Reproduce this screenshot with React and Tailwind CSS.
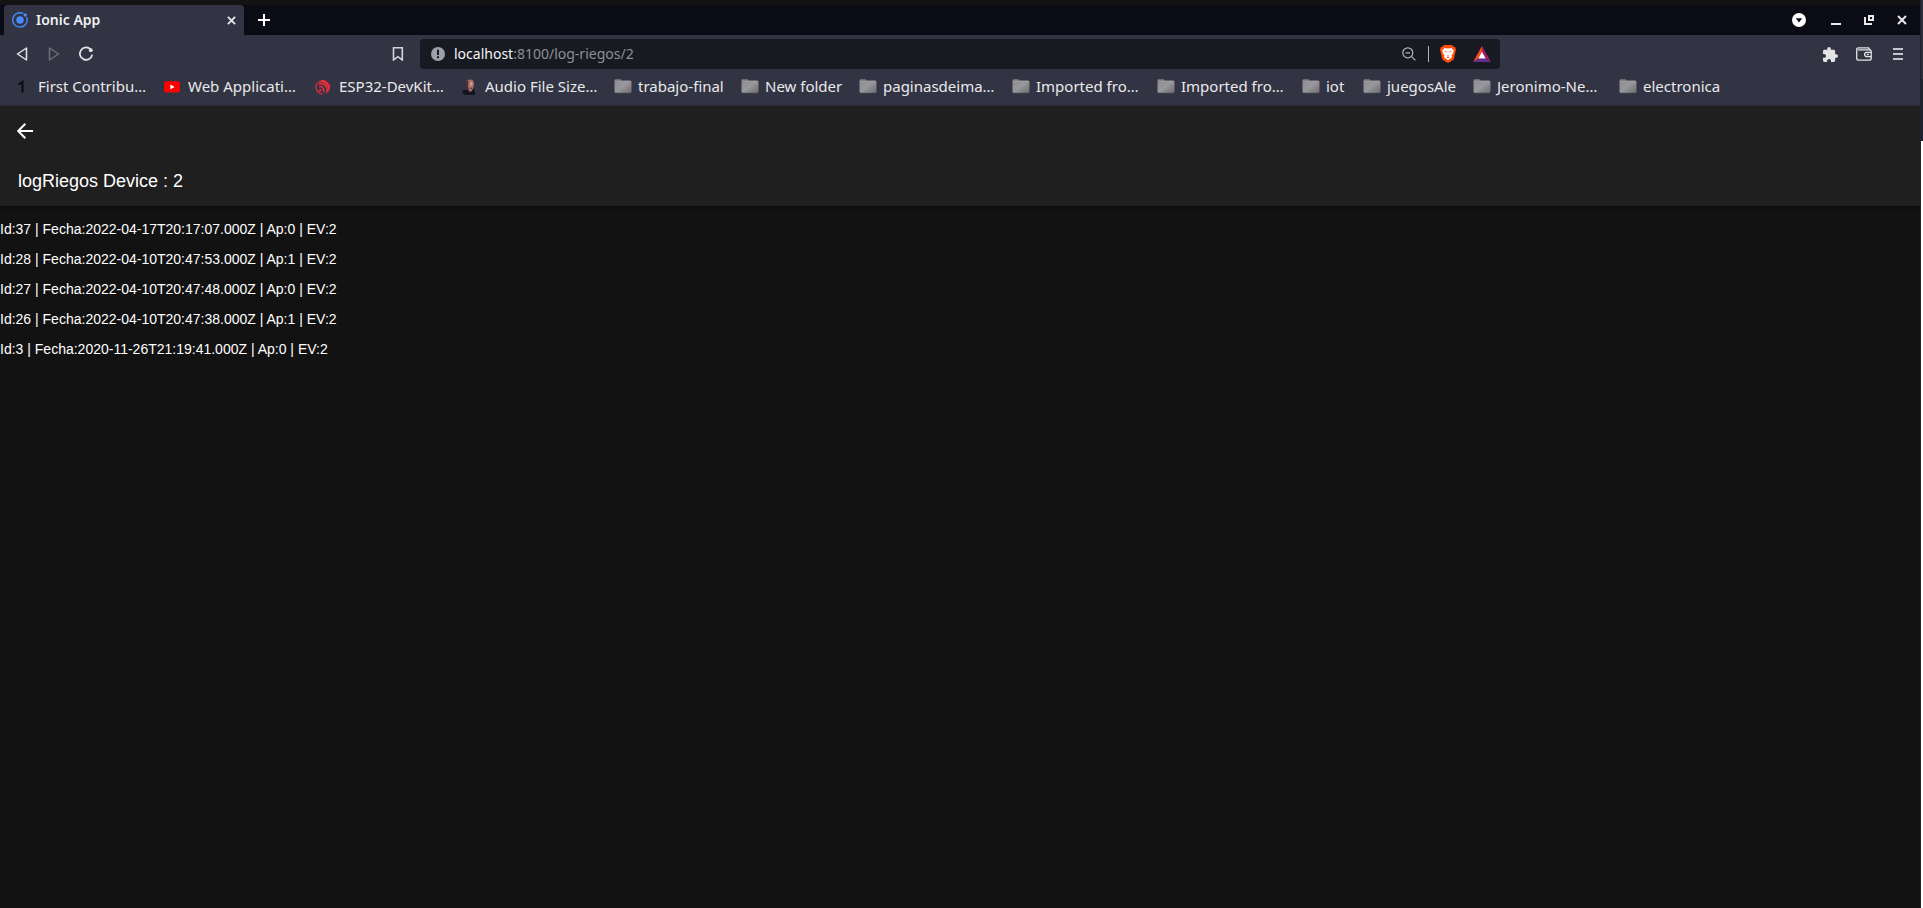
import React from "react";

const LOGS = [
  { id: 37, fecha: "2022-04-17T20:17:07.000Z", ap: 0, ev: 2 },
  { id: 28, fecha: "2022-04-10T20:47:53.000Z", ap: 1, ev: 2 },
  { id: 27, fecha: "2022-04-10T20:47:48.000Z", ap: 0, ev: 2 },
  { id: 26, fecha: "2022-04-10T20:47:38.000Z", ap: 1, ev: 2 },
  { id: 3, fecha: "2020-11-26T21:19:41.000Z", ap: 0, ev: 2 },
];

function IonicIcon() {
  return (
    <svg className="size-4" viewBox="0 0 16 16" aria-hidden="true">
      <path d="M11.4 1.6A7.2 7.2 0 1 0 14.6 5.2" fill="none" stroke="#4285f4" strokeWidth="1.5" />
      <circle cx="8" cy="8" r="3.7" fill="#4a8cff" />
      <circle cx="13.3" cy="3" r="1.7" fill="#4a8cff" />
    </svg>
  );
}

function CloseIcon({ className }) {
  return (
    <svg className={className} viewBox="0 0 10 10" fill="none" stroke="currentColor" strokeWidth="2" aria-hidden="true">
      <path d="M1 1l8 8M9 1l-8 8" />
    </svg>
  );
}

function OneIcon() {
  return (
    <svg className="size-4" viewBox="0 0 16 16" fill="none" stroke="#0a0a0a" strokeWidth="2" aria-hidden="true">
      <path d="M4.5 5.5 8.5 2.8V13.5" />
    </svg>
  );
}

function YoutubeIcon() {
  return (
    <svg className="size-4" viewBox="0 0 16 16" aria-hidden="true">
      <rect x="0" y="2.2" width="16" height="11.4" rx="2.8" fill="#f00" />
      <path d="M6.4 5.5v4.8L10.6 7.9z" fill="#fff" />
    </svg>
  );
}

function EspressifIcon() {
  return (
    <svg className="size-4" viewBox="0 0 16 16" fill="none" stroke="#e8303a" strokeWidth="1.6" aria-hidden="true">
      <defs>
        <clipPath id="disc">
          <circle cx="8" cy="8" r="7.2" />
        </clipPath>
      </defs>
      <g clipPath="url(#disc)">
        <circle cx="5.2" cy="11.2" r="1.2" fill="#e8303a" stroke="none" />
        <path d="M4.2 7.6A4 4 0 0 1 8.6 13" />
        <path d="M3.6 5A6.500 6.500 0 0 1 11.2 14.500" />
        <path d="M3 2.700A9 9 0 0 1 13.800 13.500" />
        <path d="M6 .8A11 11 0 0 1 15.500 10" />
      </g>
      <path d="M2.600 3.600A7 7 0 0 0 8 15" strokeWidth="1.200" />
    </svg>
  );
}

function PortraitIcon() {
  return (
    <svg className="size-4" viewBox="0 0 16 16" aria-hidden="true">
      <path d="M1 12.5Q4 10 7 11l6-1q1.500 3 1 6H4Q1.500 15 1 12.500z" fill="#14131f" />
      <path d="M6 1.500Q9.500-.5 12 1.500q1.500 2 .8 5.500-.8 4-3.300 6Q6.500 12 5.500 8 4.500 3.500 6 1.500z" fill="#a86f6c" />
      <path d="M5 3Q6.500 1 7.500 1.500L7 7.500l1.500 4.500Q5 11 4.500 7z" fill="#4d2f3b" />
      <path d="M9 3.500q1.500-1 2.500.2l-.5 3-1.500.8z" fill="#d49a90" />
      <path d="M9 9.500l2-.4" stroke="#5a2733" strokeWidth="1" />
    </svg>
  );
}

function FolderIcon() {
  return (
    <svg className="h-4 w-[18px]" viewBox="0 0 18 16" aria-hidden="true">
      <defs>
        <linearGradient id="folder" x1="0" y1="0" x2="1" y2="1">
          <stop offset="0" stopColor="#8c8c90" />
          <stop offset="0.5" stopColor="#97979c" />
          <stop offset="1" stopColor="#6c6c6c" />
        </linearGradient>
      </defs>
      <path d="M.5 1.500Q.5.500 1.500.5h5q.7 0 .9 1H16q1.500 0 1.500 1.500v9.500q0 1.500-1.500 1.500H2q-1.500 0-1.500-1.500z" fill="url(#folder)" />
      <path d="M1 1h5.500" stroke="#77777a" />
      <path d="M1 2.500h16" stroke="#a3a3a6" strokeWidth="0.5" />
      <path d="M1.500 14h15" stroke="#55555a" strokeWidth="0.6" />
    </svg>
  );
}

const BOOKMARKS = [
  { label: "First Contribu…", icon: OneIcon, width: "w-[150px]" },
  { label: "Web Applicati…", icon: YoutubeIcon, width: "w-[151px]" },
  { label: "ESP32-DevKit…", icon: EspressifIcon, width: "w-[146px]" },
  { label: "Audio File Size…", icon: PortraitIcon, width: "w-[153px]" },
  { label: "trabajo-final", icon: FolderIcon, width: "w-[127px]" },
  { label: "New folder", icon: FolderIcon, width: "w-[118px]" },
  { label: "paginasdeima…", icon: FolderIcon, width: "w-[153px]" },
  { label: "Imported fro…", icon: FolderIcon, width: "w-[145px]" },
  { label: "Imported fro…", icon: FolderIcon, width: "w-[145px]" },
  { label: "iot", icon: FolderIcon, width: "w-[61px]" },
  { label: "juegosAle", icon: FolderIcon, width: "w-[110px]" },
  { label: "Jeronimo-Ne…", icon: FolderIcon, width: "w-[146px]" },
  { label: "electronica", icon: FolderIcon, width: "w-[120px]" },
];

function TabStrip() {
  return (
    <div className="flex h-[30px] items-stretch bg-[#0b0b15] pl-1">
      <div className="flex w-60 items-center rounded-t-sm bg-[#323443] pr-2 pl-2">
        <IonicIcon />
        <span className="ml-2 flex-1 text-sm font-semibold text-[#f0f0f2]">Ionic App</span>
        <button type="button" aria-label="Close tab" className="text-[#e8e8ea]">
          <CloseIcon className="size-[9px]" />
        </button>
      </div>
      <button type="button" aria-label="New tab" className="ml-3 px-0.5 text-white">
        <svg className="size-3" viewBox="0 0 12 12" stroke="currentColor" strokeWidth="2" aria-hidden="true">
          <path d="M6 0v12M0 6h12" />
        </svg>
      </button>
      <div className="ml-auto flex items-center gap-[23px] pr-[13px] text-[#e8e8ea]">
        <button type="button" aria-label="Search tabs" className="text-white">
          <svg className="size-[14px]" viewBox="0 0 14 14" aria-hidden="true">
            <circle cx="7" cy="7" r="7" fill="currentColor" />
            <path d="M3.8 5.2h6.4L7 9.6z" fill="#0b0b15" />
          </svg>
        </button>
        <button type="button" aria-label="Minimize" className="ml-0.5">
          <svg className="size-[10px]" viewBox="0 0 10 10" aria-hidden="true">
            <path d="M0 8h10v2H0z" fill="currentColor" />
          </svg>
        </button>
        <button type="button" aria-label="Restore">
          <svg className="size-[10px]" viewBox="0 0 10 10" fill="none" stroke="currentColor" strokeWidth="2" aria-hidden="true">
            <path d="M5 1h4v4H5z" />
            <path d="M1 2v7h7" />
          </svg>
        </button>
        <button type="button" aria-label="Close window">
          <CloseIcon className="size-[10px]" />
        </button>
      </div>
    </div>
  );
}

function AddressBar() {
  return (
    <div className="flex h-[38px] items-center bg-[#323443] pr-[17px] pl-4">
      <div className="flex w-[376px] items-center text-[#e4e4e6]">
        <button type="button" aria-label="Back">
          <svg className="h-[14px] w-3" viewBox="0 0 12 14" fill="none" stroke="currentColor" strokeWidth="1.5" strokeLinejoin="round" aria-hidden="true">
            <path d="M10.500 1v12L1.500 7z" />
          </svg>
        </button>
        <button type="button" aria-label="Forward" className="ml-5 text-[#6d6e79]">
          <svg className="h-[14px] w-3" viewBox="0 0 12 14" fill="none" stroke="currentColor" strokeWidth="1.5" strokeLinejoin="round" aria-hidden="true">
            <path d="M1.500 1v12l9-6z" />
          </svg>
        </button>
        <button type="button" aria-label="Reload" className="ml-[18px]">
          <svg className="size-4" viewBox="0 0 16 16" fill="none" stroke="currentColor" strokeWidth="1.7" aria-hidden="true">
            <path d="M12.600 3.400A6.200 6.200 0 1 0 14.200 8.600" />
            <circle cx="12.8" cy="4.2" r="1.9" fill="currentColor" stroke="none" />
          </svg>
        </button>
      </div>
      <button type="button" aria-label="Bookmark this page" className="text-[#d4d4d8]">
        <svg className="h-[14px] w-3" viewBox="0 0 12 14" fill="none" stroke="currentColor" strokeWidth="1.6" aria-hidden="true">
          <path d="M1.500.8h8.800v12.200L5.900 9.700 1.500 13z" />
        </svg>
      </button>
      <div className="ml-4 flex h-[30px] w-[1080px] items-center rounded-sm bg-[#181a21] pr-[9px] pl-[11px]">
        <svg className="size-[14px] shrink-0" viewBox="0 0 14 14" aria-hidden="true">
          <circle cx="7" cy="7" r="7" fill="#9d9fa9" />
          <path d="M6 2.800h2v5.200H6zM6 9.200h2v2H6z" fill="#181a21" />
        </svg>
        <div className="ml-[9px] flex-1 text-sm text-[#8e8f94]">
          <span className="text-[#f4f4f6]">localhost</span>:8100/log-riegos/2
        </div>
        <button type="button" aria-label="Zoom" className="text-[#b4b5ba]">
          <svg className="size-[14px]" viewBox="0 0 14 14" fill="none" stroke="currentColor" strokeWidth="1.2" aria-hidden="true">
            <circle cx="5.8" cy="5.8" r="5" />
            <path d="M9.600 9.600l3.800 3.800M3.600 5.800h4.400" />
          </svg>
        </button>
        <div className="ml-3 h-4 w-px bg-[#b4b5ba]" />
        <button type="button" aria-label="Brave Shields" className="ml-[11px]">
          <svg className="h-[18px] w-4" viewBox="0 0 16 18" aria-hidden="true">
            <path d="M4 0h8l1.600 1.800h1.400L16 4.500l-.4 1.700-1.700 7.200q-.3 1.100-1.200 1.800L8 18l-4.700-2.800q-.9-.7-1.200-1.800L.4 6.200 0 4.500 1 1.800h1.400z" fill="#fb4f0b" />
            <path d="M4.500 3 8 3.500l3.500-.5 2.200 2.600-.6 2.400-1.600 2.400.4 1.700-1.500 1.300L8 15.200l-2.400-1.800-1.500-1.300.4-1.700L2.900 8l-.6-2.400z" fill="#fff" />
            <path d="M4 6l2.900.5-.7 1.100zM12 6l-2.900.5.7 1.100zM7.200 10h1.600L8 11.200zM6.200 12.300 8 11.500l1.800.8L8 13.100z" fill="#fb4f0b" />
          </svg>
        </button>
        <button type="button" aria-label="Brave Rewards" className="ml-[17px]">
          <svg className="h-4 w-[18px]" viewBox="0 0 18 16" aria-hidden="true">
            <path d="M9 0v6L5.300 12.500 0 16z" fill="#ff4724" />
            <path d="M9 0l9 16-5.300-3.500L9 6z" fill="#9e1f63" />
            <path d="M0 16l5.300-3.500h7.400L18 16z" fill="#662d91" />
            <path d="M9 5.800l3.700 6.700H5.300z" fill="#fff" />
          </svg>
        </button>
      </div>
      <div className="ml-auto flex items-center text-[#e4e4e6]">
        <button type="button" aria-label="Extensions">
          <svg className="size-[15px]" viewBox="2 1 21 21" aria-hidden="true">
            <path d="M20.5 11H19V7c0-1.100-.9-2-2-2h-4V3.500C13 2.120 11.880 1 10.500 1S8 2.120 8 3.500V5H4c-1.100 0-1.990.9-1.990 2v3.800H3.500c1.490 0 2.700 1.210 2.700 2.700s-1.210 2.700-2.700 2.700H2V20c0 1.100.9 2 2 2h3.800v-1.500c0-1.490 1.210-2.700 2.700-2.700s2.700 1.210 2.700 2.700V22H17c1.100 0 2-.9 2-2v-4h1.500c1.380 0 2.500-1.120 2.500-2.500S21.880 11 20.500 11z" fill="currentColor" />
          </svg>
        </button>
        <button type="button" aria-label="Wallet" className="ml-[18px]">
          <svg className="h-[14px] w-4" viewBox="0 0 16 14" fill="none" stroke="currentColor" strokeWidth="1.3" aria-hidden="true">
            <path d="M15.200 4.500V4.200q0-1.400-1.400-1.400H2M14 2.800 12.500.8H2.500q-1.800 0-1.800 1.700v8.500q0 2.200 2.200 2.200h10.200q2.100 0 2.100-2V4.500" />
            <path d="M15.300 5.300h-4.500a2.200 2.200 0 0 0 0 4.400h4.500M11 7.500h1.800" />
          </svg>
        </button>
        <button type="button" aria-label="Menu" className="ml-[21px] text-[#c6c6cb]">
          <svg className="h-3 w-[10px]" viewBox="0 0 10 12" aria-hidden="true">
            <path d="M0 0h10v2H0zM0 5h10v2H0zM0 10h10v2H0z" fill="currentColor" />
          </svg>
        </button>
      </div>
    </div>
  );
}

function BookmarksBar() {
  return (
    <nav className="flex h-[33px] items-center bg-[#323443] pb-1.5 pl-3.5">
      {BOOKMARKS.map(({ label, icon: Icon, width }, i) => (
        <a key={i} href="#" className={`${width} flex shrink-0 items-center text-[15px] whitespace-nowrap text-[#e9e9eb]`}>
          <span className="flex w-6 shrink-0">
            <Icon />
          </span>
          {label}
        </a>
      ))}
    </nav>
  );
}

export default function App() {
  return (
    <div className="flex min-h-screen bg-[#121212]">
      <div className="flex min-w-0 flex-1 flex-col">
        <header className="border-t-[5px] border-[#131313] font-['Noto_Sans',sans-serif]">
          <TabStrip />
          <AddressBar />
          <BookmarksBar />
        </header>
        <div className="bg-[#1f1f1f] font-['Liberation_Sans',sans-serif] text-white shadow-[0_1px_3px_#0a0a0a]">
          <div className="flex h-[50px] items-center pl-[17px]">
            <button type="button" aria-label="Back">
              <svg className="size-4" viewBox="0 0 16 16" fill="none" stroke="currentColor" strokeWidth="2" aria-hidden="true">
                <path d="M8.300.8 1.200 8l7.100 7.200M1.500 8H16" />
              </svg>
            </button>
          </div>
          <h1 className="flex h-[50px] items-center pl-[18px] text-lg">logRiegos Device : 2</h1>
        </div>
        <main className="flex-1 pt-[13px] font-['Liberation_Sans',sans-serif] text-sm text-white">
          <ul className="flex flex-col gap-2.5">
            {LOGS.map((log) => (
              <li key={log.id}>
                Id:{log.id} | Fecha:{log.fecha} | Ap:{log.ap} | EV:{log.ev}
              </li>
            ))}
          </ul>
        </main>
      </div>
      <div className="flex w-[3px] flex-col border-l border-[#222222]">
        <div className="h-[79px] bg-[#2b2d3c]" />
        <div className="h-[62px] bg-[#1c2230]" />
        <div className="flex-1 bg-white" />
      </div>
    </div>
  );
}
